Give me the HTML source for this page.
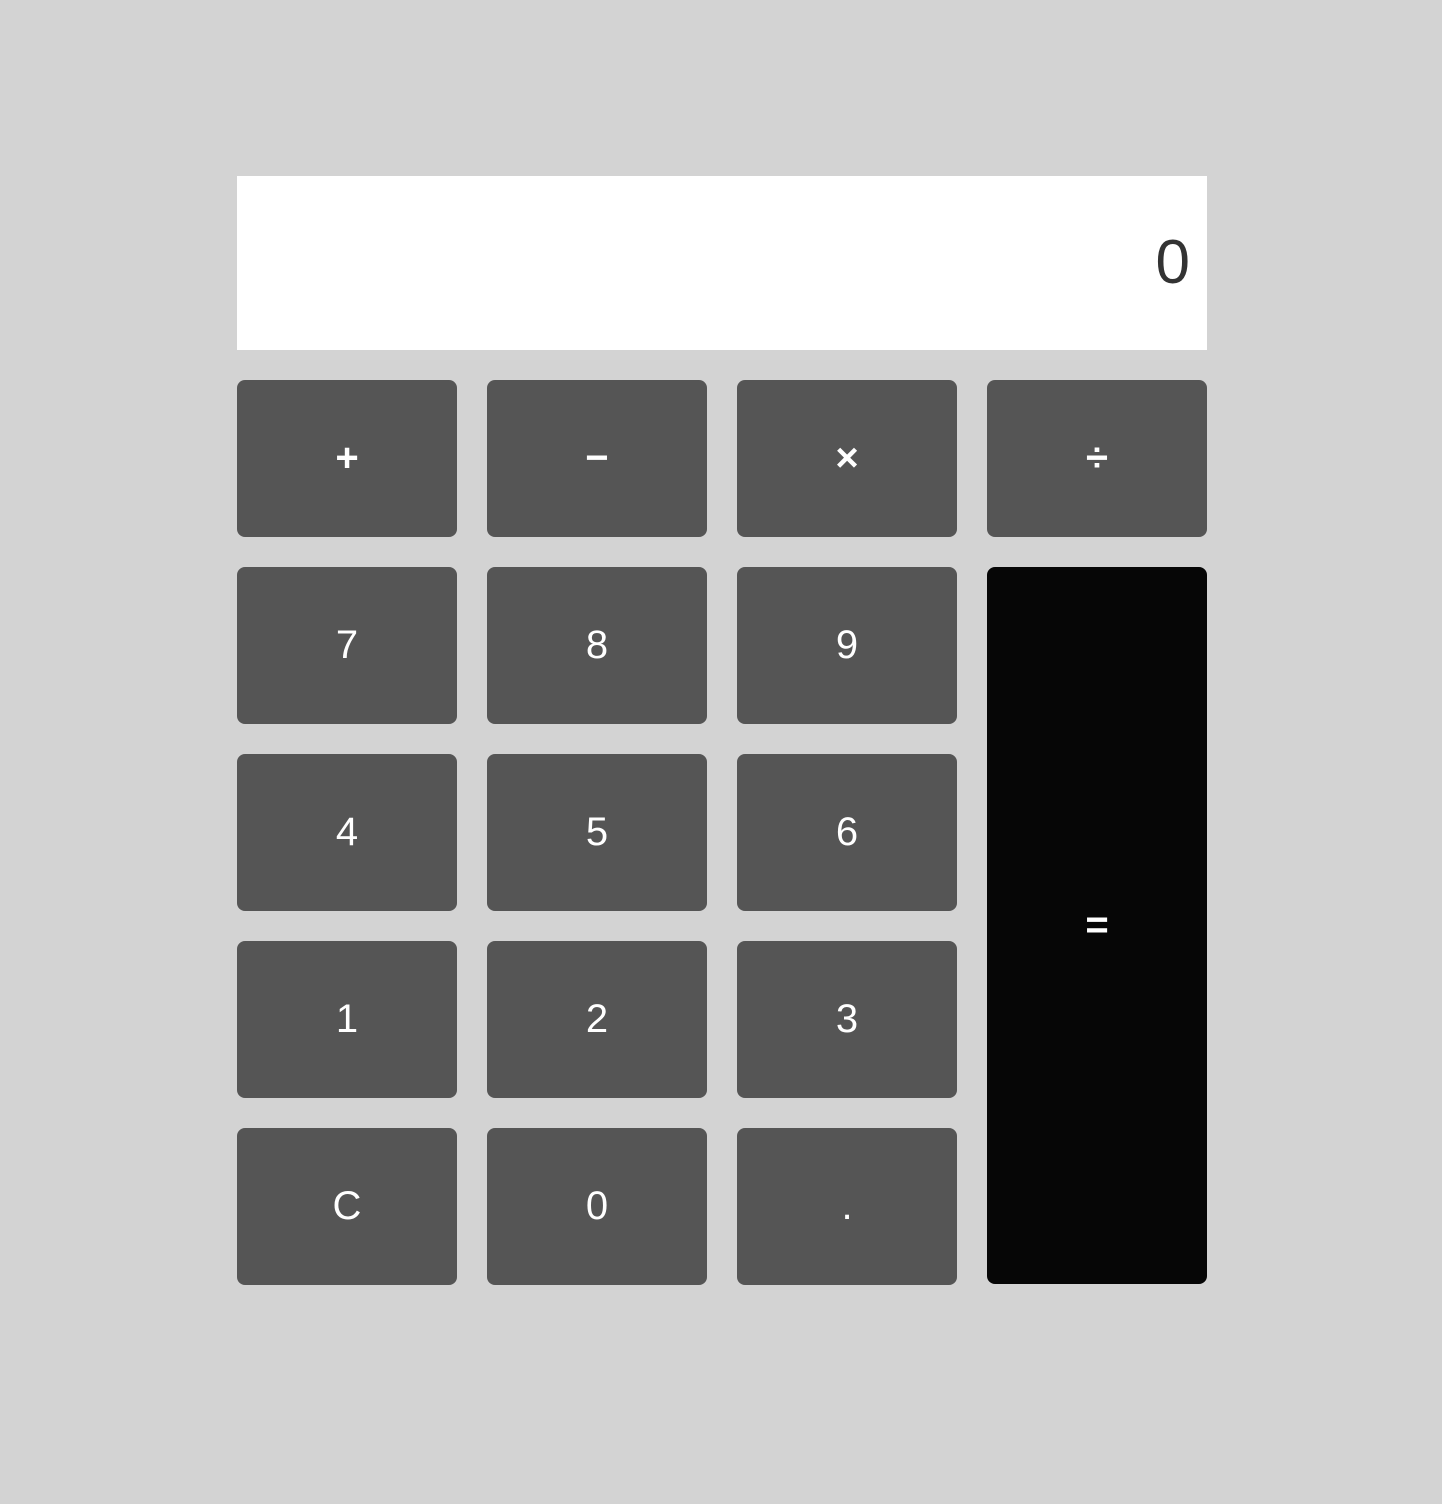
<!DOCTYPE html>
<html><head><style>
body{margin:0;background:#d3d3d3;width:1442px;height:1504px;position:relative;font-family:"Liberation Sans",Arial,sans-serif;}
.d{position:absolute;left:237px;top:176px;width:970px;height:174px;background:#fff;color:#333;font-size:62px;text-align:right;box-sizing:border-box;padding-right:17px;line-height:174px;}
.b{position:absolute;width:220px;height:157px;background:#555;border-radius:8px;color:#fff;font-size:40px;display:flex;align-items:center;justify-content:center;}
.o{font-weight:bold;}
.eq{background:#060606;height:717px;}
</style></head><body>
<div class="d">0</div>
<div class="b o" style="left:237px;top:380px">+</div>
<div class="b o" style="left:487px;top:380px">−</div>
<div class="b o" style="left:737px;top:380px">×</div>
<div class="b o" style="left:987px;top:380px">÷</div>
<div class="b" style="left:237px;top:567px">7</div>
<div class="b" style="left:487px;top:567px">8</div>
<div class="b" style="left:737px;top:567px">9</div>
<div class="b eq o" style="left:987px;top:567px">=</div>
<div class="b" style="left:237px;top:754px">4</div>
<div class="b" style="left:487px;top:754px">5</div>
<div class="b" style="left:737px;top:754px">6</div>
<div class="b" style="left:237px;top:941px">1</div>
<div class="b" style="left:487px;top:941px">2</div>
<div class="b" style="left:737px;top:941px">3</div>
<div class="b" style="left:237px;top:1128px">C</div>
<div class="b" style="left:487px;top:1128px">0</div>
<div class="b" style="left:737px;top:1128px">.</div>
</body></html>
